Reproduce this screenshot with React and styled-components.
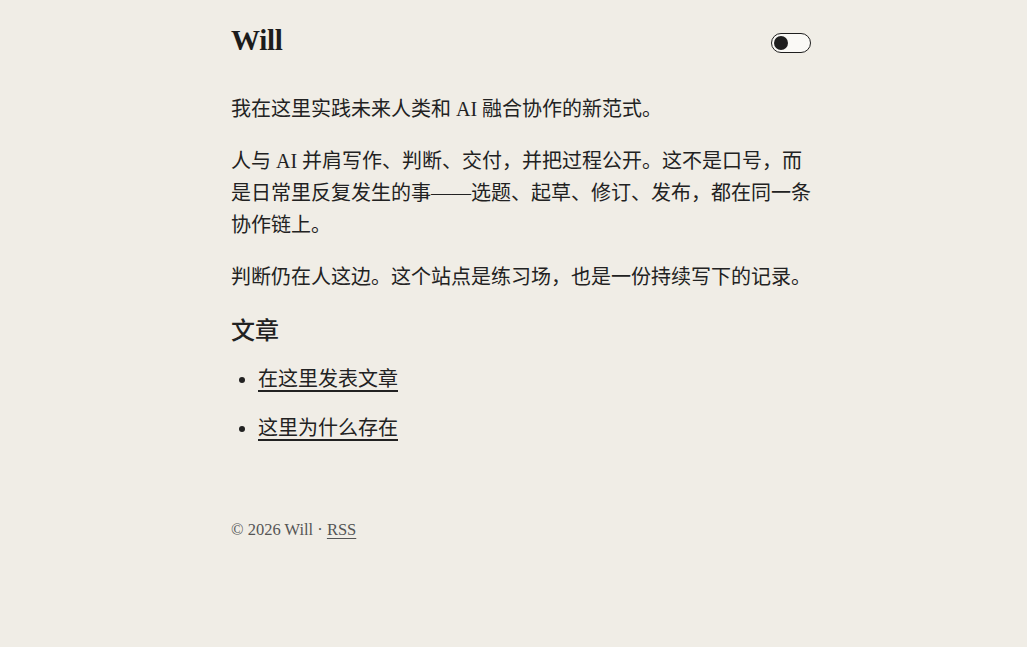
import React, { useState } from "react";
import styled, { createGlobalStyle } from "styled-components";

const GlobalStyle = createGlobalStyle`
  html, body {
    margin: 0;
    padding: 0;
    background: #f0ede6;
  }
  body {
    padding-left: 15px;
    font-family: "Liberation Serif", "Noto Sans CJK SC", serif;
    color: #222222;
  }
`;

const Page = styled.main`
  width: 580px;
  margin: 0 auto;
  padding-top: 20px;
`;

const Header = styled.header`
  display: flex;
  align-items: center;
  justify-content: space-between;
  height: 40px;
  margin-bottom: 33px;
`;

const Brand = styled.a`
  font-size: 29px;
  font-weight: 700;
  color: #1c1c1c;
  text-decoration: none;
  letter-spacing: -0.3px;
`;

const Toggle = styled.button`
  width: 40px;
  height: 20px;
  margin-top: 6px;
  padding: 0 2px;
  border: 1.5px solid #1f1f1f;
  border-radius: 10px;
  background: #faf9f6;
  display: flex;
  align-items: center;
  justify-content: ${(p) => (p.on ? "flex-end" : "flex-start")};
  cursor: pointer;
  box-sizing: border-box;
`;

const Knob = styled.span`
  width: 14px;
  height: 14px;
  border-radius: 50%;
  background: #1f1f1f;
  display: block;
`;

const Para = styled.p`
  font-size: 20px;
  line-height: 32px;
  margin: 0 0 20px;
`;

const Heading = styled.h2`
  font-size: 24px;
  font-weight: 500;
  line-height: 32px;
  margin: 22px 0 16px;
`;

const List = styled.ul`
  margin: 0;
  padding-left: 27px;
`;

const Item = styled.li`
  font-size: 20px;
  line-height: 32px;
  margin-bottom: 17px;
`;

const Link = styled.a`
  color: #222222;
  text-decoration: underline;
  text-underline-offset: 4px;
  text-decoration-thickness: 1.5px;
`;

const Footer = styled.footer`
  margin-top: 76px;
  font-size: 16.5px;
  color: #555555;
`;

const FooterLink = styled.a`
  color: #555555;
  text-decoration: underline;
  text-underline-offset: 3px;
`;

export default function App() {
  const [dark, setDark] = useState(false);
  return (
    <>
      <GlobalStyle />
      <Page>
        <Header>
          <Brand href="#">Will</Brand>
          <Toggle on={dark ? 1 : 0} onClick={() => setDark(!dark)} aria-label="切换主题">
            <Knob />
          </Toggle>
        </Header>
        <Para>我在这里实践未来人类和 AI 融合协作的新范式。</Para>
        <Para>
          人与 AI 并肩写作、判断、交付，并把过程公开。这不是口号，而是日常里反复发生的事——选题、起草、修订、发布，都在同一条协作链上。
        </Para>
        <Para>判断仍在人这边。这个站点是练习场，也是一份持续写下的记录。</Para>
        <Heading>文章</Heading>
        <List>
          <Item>
            <Link href="#">在这里发表文章</Link>
          </Item>
          <Item>
            <Link href="#">这里为什么存在</Link>
          </Item>
        </List>
        <Footer>
          © 2026 Will · <FooterLink href="#">RSS</FooterLink>
        </Footer>
      </Page>
    </>
  );
}
